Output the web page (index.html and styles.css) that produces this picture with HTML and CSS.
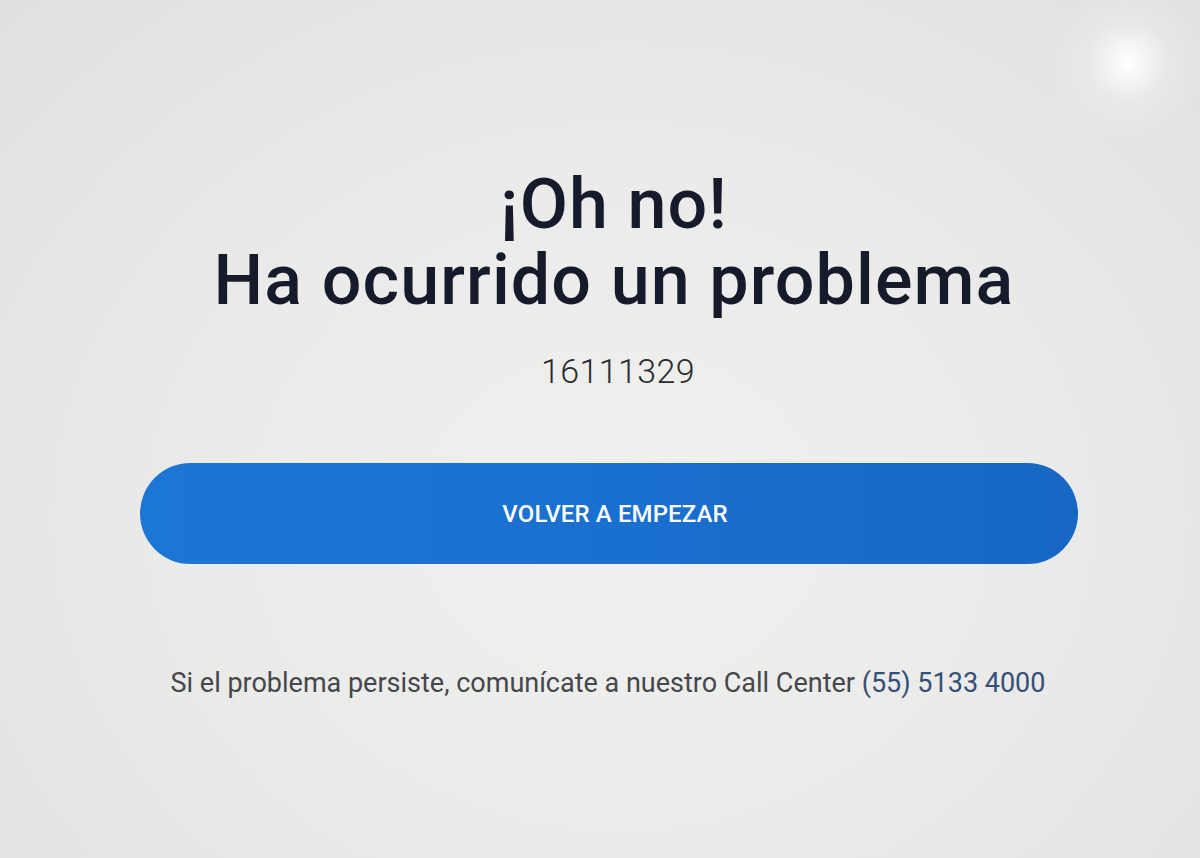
FILE: index.html
```html
<!DOCTYPE html>
<html lang="es">
<head>
<meta charset="utf-8">
<title>Ha ocurrido un problema</title>
<link rel="stylesheet" href="styles.css">
</head>
<body>
<main class="screen">
  <h1 class="title">
    <span class="title-line">¡Oh no!</span>
    <span class="title-line">Ha ocurrido un problema</span>
  </h1>
  <p class="code">16111329</p>
  <button class="restart" type="button">VOLVER A EMPEZAR</button>
  <p class="help">Si el problema persiste, comunícate a nuestro Call Center <span class="phone">(55) 5133 4000</span></p>
</main>
</body>
</html>
```

FILE: styles.css
```css
html, body {
  margin: 0;
  padding: 0;
  height: 100%;
}

body {
  font-family: Roboto, "Liberation Sans", Arial, sans-serif;
  background:
    radial-gradient(circle at 1128px 62px, rgba(255,255,255,1) 0, rgba(255,255,255,0.7) 14px, rgba(255,255,255,0.2) 40px, rgba(255,255,255,0) 80px),
    radial-gradient(ellipse at 620px 520px, #f0f0ee 0, #ebebe9 45%, #e0e0de 100%);
  overflow: hidden;
}

.screen {
  box-sizing: border-box;
  width: 1200px;
  height: 858px;
  padding: 166px 0 0 22px;
  display: flex;
  flex-direction: column;
  align-items: center;
}

.title {
  margin: 0 0 0 6px;
  font-weight: 500;
  font-size: 70px;
  line-height: 76px;
  letter-spacing: 1.1px;
  color: #161b2c;
  text-align: center;
  display: flex;
  flex-direction: column;
  align-items: center;
}

.title-line {
  display: block;
  white-space: nowrap;
}

.code {
  margin: 33px 0 0 14px;
  font-weight: 300;
  font-size: 34px;
  line-height: 40px;
  color: #2a2b2e;
  letter-spacing: 0.4px;
}

.restart {
  margin-top: 72px;
  margin-right: 4px;
  width: 938px;
  height: 101px;
  border: 0;
  border-radius: 51px;
  background: linear-gradient(90deg, #1c76d6 0%, #1a70cf 50%, #1667c4 100%);
  color: #ffffff;
  font-family: Roboto, "Liberation Sans", Arial, sans-serif;
  font-weight: 500;
  font-size: 24px;
  letter-spacing: 0.1px;
  display: flex;
  align-items: center;
  justify-content: center;
  padding: 0 0 0 12px;
  cursor: pointer;
}

.help {
  margin: 103px 6px 0 0;
  font-size: 27px;
  line-height: 32px;
  color: #45474c;
  white-space: nowrap;
}

.phone {
  color: #34507a;
}
```
